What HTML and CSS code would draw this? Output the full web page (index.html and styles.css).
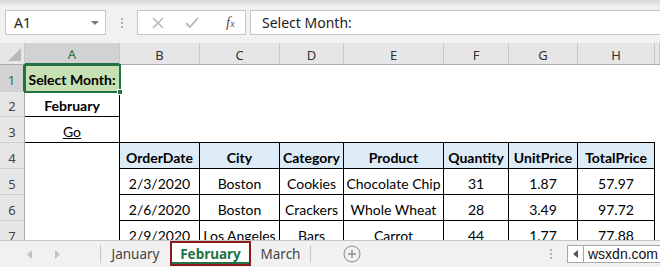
FILE: index.html
```html
<!DOCTYPE html>
<html>
	<head>
		<meta charset="utf-8">
		<title>Select Month</title>
		<link rel="stylesheet" href="styles.css">
	</head>
	<body>
		<div class="formula-bar">
			<div class="name-box">A1<span class="drop"></span></div>
			<div class="grip"><i></i><i></i><i></i></div>
			<div class="fx-box">
				<svg class="cancel" width="12" height="12" viewBox="0 0 12 12"><path d="M1 1L11 11M11 1L1 11" stroke="#b8b8b8" stroke-width="1.6" fill="none"/></svg>
				<svg class="enter" width="14" height="11" viewBox="0 0 14 11"><path d="M1 6L5 10L13 1" stroke="#b8b8b8" stroke-width="1.8" fill="none"/></svg>
				<span class="fx">f<sub>x</sub></span>
			</div>
			<div class="fx-input">Select Month:</div>
		</div>

		<div class="sheet">
			<!-- column headers -->
			<div class="corner"><span class="tri"></span></div>
			<div class="ch on">A</div>
			<div class="ch">B</div>
			<div class="ch">C</div>
			<div class="ch">D</div>
			<div class="ch">E</div>
			<div class="ch">F</div>
			<div class="ch">G</div>
			<div class="ch">H</div>
			<div class="ch"></div>

			<!-- row 1 -->
			<div class="rh on">1</div>
			<div class="c box bold a1">Select Month:<span class="handle"></span></div>
			<div class="c wide"></div>

			<!-- row 2 -->
			<div class="rh">2</div>
			<div class="c box bold">February</div>
			<div class="c wide"></div>

			<!-- row 3 -->
			<div class="rh">3</div>
			<div class="c box"><u>Go</u></div>
			<div class="c top-edge"></div>
			<div class="c"></div>

			<!-- row 4 -->
			<div class="rh">4</div>
			<div class="c left-edge"></div>
			<div class="c t th">OrderDate</div>
			<div class="c t th">City</div>
			<div class="c t th">Category</div>
			<div class="c t th">Product</div>
			<div class="c t th">Quantity</div>
			<div class="c t th">UnitPrice</div>
			<div class="c t th">TotalPrice</div>
			<div class="c"></div>

			<!-- row 5 -->
			<div class="rh">5</div>
			<div class="c left-edge"></div>
			<div class="c t">2/3/2020</div>
			<div class="c t">Boston</div>
			<div class="c t">Cookies</div>
			<div class="c t">Chocolate Chip</div>
			<div class="c t">31</div>
			<div class="c t">1.87</div>
			<div class="c t">57.97</div>
			<div class="c"></div>

			<!-- row 6 -->
			<div class="rh">6</div>
			<div class="c left-edge"></div>
			<div class="c t">2/6/2020</div>
			<div class="c t">Boston</div>
			<div class="c t">Crackers</div>
			<div class="c t">Whole Wheat</div>
			<div class="c t">28</div>
			<div class="c t">3.49</div>
			<div class="c t">97.72</div>
			<div class="c"></div>

			<!-- row 7 -->
			<div class="rh">7</div>
			<div class="c left-edge"></div>
			<div class="c t">2/9/2020</div>
			<div class="c t">Los Angeles</div>
			<div class="c t">Bars</div>
			<div class="c t">Carrot</div>
			<div class="c t">44</div>
			<div class="c t">1.77</div>
			<div class="c t">77.88</div>
			<div class="c"></div>
		</div>

		<div class="tabs">
			<div class="nav">
				<svg width="6" height="9" viewBox="0 0 6 9"><path d="M5 0L0 4.5L5 9Z" fill="#c4c4c4"/></svg>
				<svg width="6" height="9" viewBox="0 0 6 9"><path d="M1 0L6 4.5L1 9Z" fill="#c4c4c4"/></svg>
			</div>
			<div class="tab jan">January</div>
			<div class="tab active">February</div>
			<div class="tab mar">March</div>
			<div class="add">
				<svg width="18" height="18" viewBox="0 0 18 18"><circle cx="9" cy="9" r="8" stroke="#8a8a8a" stroke-width="1" fill="none"/><path d="M9 5V13M5 9H13" stroke="#8a8a8a" stroke-width="1.3"/></svg>
			</div>
			<div class="grip tab-grip"><i></i><i></i><i></i></div>
			<div class="scroll">
				<span class="arrow"><svg width="5" height="8" viewBox="0 0 5 8"><path d="M5 0L0 4L5 8Z" fill="#555"/></svg></span>
				<span class="mark">wsxdn.com</span>
			</div>
		</div>
	</body>
</html>
```

FILE: styles.css
```css
* {
	margin: 0;
	padding: 0;
	box-sizing: border-box;
}

body {
	width: 660px;
	height: 267px;
	overflow: hidden;
	background: #ffffff;
	font-family: Lato, "Liberation Sans", sans-serif;
	color: #000000;
}

/* formula bar */
.formula-bar {
	height: 43px;
	display: flex;
	align-items: flex-start;
	padding: 10px 0 0 5px;
	background: linear-gradient(#d6d6d6, #f1f1f1 7px, #f1f1f1);
	font-family: "Noto Sans", "Open Sans", sans-serif;
}

.name-box {
	width: 101px;
	height: 25px;
	border: 1px solid #c6c6c6;
	background: #ffffff;
	display: flex;
	align-items: center;
	padding-left: 8px;
	font-size: 14px;
	color: #222222;
	position: relative;
}

.name-box .drop {
	position: absolute;
	right: 6px;
	top: 10px;
	border-left: 4px solid transparent;
	border-right: 4px solid transparent;
	border-top: 4px solid #777777;
}

.grip {
	width: 31px;
	height: 25px;
	flex-shrink: 0;
	display: flex;
	flex-direction: column;
	align-items: center;
	justify-content: center;
	gap: 2px;
}

.grip i {
	width: 2px;
	height: 2px;
	background: #b4b4b4;
}

.fx-box {
	width: 109px;
	height: 25px;
	border: 1px solid #c6c6c6;
	background: #ffffff;
	display: flex;
	align-items: center;
	padding-left: 14px;
}

.fx-box .enter {
	margin-left: 21px;
}

.fx-box .fx {
	margin-left: 27px;
	font-family: "Liberation Serif", serif;
	font-style: italic;
	font-size: 15px;
	color: #555555;
}

.fx-box .fx sub {
	font-size: 10px;
	vertical-align: 0;
}

.fx-input {
	flex: 1;
	height: 25px;
	margin-left: 4px;
	border: 1px solid #c6c6c6;
	border-right: none;
	background: #ffffff;
	display: flex;
	align-items: center;
	padding-left: 11px;
	font-size: 14px;
	color: #222222;
}

/* grid */
.sheet {
	height: 197px;
	overflow: hidden;
	display: grid;
	grid-template-columns: 25px 95px 80px 80px 64px 100px 65px 69px 77px 1fr;
	grid-template-rows: 22px 27px 25px 26px 26px 26px 26px 26px;
	font-size: 14px;
}

.corner {
	background: #e6e6e6;
	border-right: 1px solid #c8c8c8;
	border-bottom: 1px solid #ababab;
	position: relative;
}

.corner .tri {
	position: absolute;
	right: 3px;
	bottom: 3px;
	border-left: 13px solid transparent;
	border-bottom: 13px solid #b9b9b9;
}

.ch {
	background: #e6e6e6;
	border-right: 1px solid #c8c8c8;
	border-bottom: 1px solid #ababab;
	display: flex;
	align-items: center;
	justify-content: center;
	padding-top: 2px;
	color: #333333;
	font-family: "Noto Sans", "Open Sans", sans-serif;
	font-size: 13px;
}

.ch.on {
	background: #d2d2d2;
	color: #217346;
	border-bottom: 2px solid #217346;
}

.rh {
	background: #e6e6e6;
	border-right: 1px solid #ababab;
	border-bottom: 1px solid #d0d0d0;
	display: flex;
	align-items: center;
	justify-content: center;
	padding-top: 4px;
	color: #444444;
	font-family: "Noto Sans", "Open Sans", sans-serif;
	font-size: 13px;
}

.rh.on {
	background: #d2d2d2;
	color: #217346;
	border-right: 2px solid #217346;
}

.c {
	display: flex;
	align-items: center;
	justify-content: center;
	padding-top: 3px;
	white-space: nowrap;
}

.c.wide {
	grid-column: span 8;
}

.c.top-edge {
	grid-column: span 7;
	border-bottom: 1px solid #000000;
}

.c.left-edge {
	border-right: 1px solid #000000;
}

.c.box,
.c.t {
	border-right: 1px solid #000000;
	border-bottom: 1px solid #000000;
}

.bold,
.th {
	font-weight: bold;
}

.c.th {
	background: #ddebf7;
}

.c.a1 {
	background: #c6e0b4;
	outline: 2px solid #217346;
	outline-offset: -1px;
	position: relative;
}

.a1 .handle {
	position: absolute;
	right: -4px;
	bottom: -4px;
	width: 6px;
	height: 6px;
	background: #217346;
	border: 1px solid #ffffff;
}

/* sheet tabs */
.tabs {
	height: 27px;
	border-top: 1px solid #c6c6c6;
	background: #f1f1f1;
	display: flex;
	align-items: stretch;
	font-family: "Noto Sans", "Open Sans", sans-serif;
	font-size: 13.5px;
	color: #444444;
}

.tabs > * {
	flex-shrink: 0;
}

.nav {
	width: 101px;
	display: flex;
	align-items: center;
	gap: 21px;
	padding-left: 27px;
	border-right: 1px solid #c6c6c6;
	margin: 4px 0;
}

.tab {
	display: flex;
	align-items: center;
	justify-content: center;
}

.tab.jan {
	width: 69px;
}

.tab.active {
	width: 81px;
	margin-bottom: 1px;
	background: #ffffff;
	color: #217346;
	font-weight: bold;
	border: 2px solid #8b1c1c;
	box-shadow: inset 0 -2px 0 #217346;
}

.tab.mar {
	width: 60px;
	border-right: 1px solid #c6c6c6;
	margin: 4px 0;
}

.add {
	width: 82px;
	display: flex;
	align-items: center;
	justify-content: center;
}

.tab-grip {
	width: 20px;
	height: auto;
	margin-left: 148px;
}

.scroll {
	flex: 1 1 auto;
	min-width: 0;
	display: flex;
	align-items: center;
	margin-left: 6px;
}

.scroll .arrow {
	width: 17px;
	height: 18px;
	flex-shrink: 0;
	border: 1px solid #a8a8a8;
	background: #ffffff;
	display: flex;
	align-items: center;
	justify-content: center;
}

.scroll .mark {
	flex: 1;
	height: 18px;
	background: #ffffff;
	border-top: 1px solid #a8a8a8;
	border-bottom: 1px solid #a8a8a8;
	padding-left: 4px;
	font-family: "Liberation Sans", sans-serif;
	font-size: 14px;
	line-height: 17px;
	color: #111111;
	white-space: nowrap;
	overflow: hidden;
}
```
